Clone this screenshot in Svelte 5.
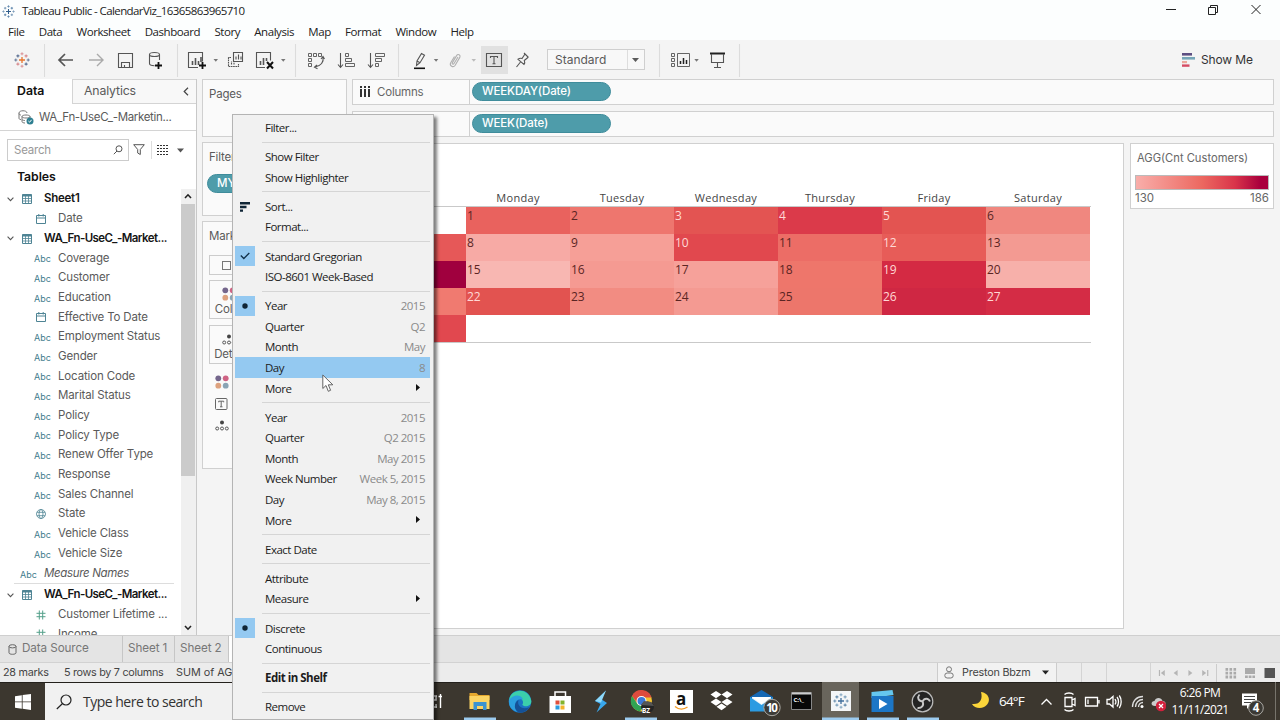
<script>
    const menus = ['File', 'Data', 'Worksheet', 'Dashboard', 'Story', 'Analysis', 'Map', 'Format', 'Window', 'Help'];

    const fields = [
        {kind: 'table', name: 'Sheet1'},
        {kind: 'date', name: 'Date'},
        {kind: 'table', name: 'WA_Fn-UseC_-Market...'},
        {kind: 'abc', name: 'Coverage'},
        {kind: 'abc', name: 'Customer'},
        {kind: 'abc', name: 'Education'},
        {kind: 'date', name: 'Effective To Date'},
        {kind: 'abc', name: 'Employment Status'},
        {kind: 'abc', name: 'Gender'},
        {kind: 'abc', name: 'Location Code'},
        {kind: 'abc', name: 'Marital Status'},
        {kind: 'abc', name: 'Policy'},
        {kind: 'abc', name: 'Policy Type'},
        {kind: 'abc', name: 'Renew Offer Type'},
        {kind: 'abc', name: 'Response'},
        {kind: 'abc', name: 'Sales Channel'},
        {kind: 'geo', name: 'State'},
        {kind: 'abc', name: 'Vehicle Class'},
        {kind: 'abc', name: 'Vehicle Size'},
        {kind: 'names', name: 'Measure Names'},
        {kind: 'table', name: 'WA_Fn-UseC_-Market...'},
        {kind: 'num', name: 'Customer Lifetime ...'},
        {kind: 'num', name: 'Income'}
    ];

    // null is a separator
    let items = [
        {label: 'Filter...'},
        null,
        {label: 'Show Filter'},
        {label: 'Show Highlighter'},
        null,
        {label: 'Sort...', mark: 'sort'},
        {label: 'Format...'},
        null,
        {label: 'Standard Gregorian', mark: 'check'},
        {label: 'ISO-8601 Week-Based'},
        null,
        {label: 'Year', value: '2015', mark: 'dot'},
        {label: 'Quarter', value: 'Q2'},
        {label: 'Month', value: 'May'},
        {label: 'Day', value: '8', hover: true},
        {label: 'More', more: true},
        null,
        {label: 'Year', value: '2015'},
        {label: 'Quarter', value: 'Q2 2015'},
        {label: 'Month', value: 'May 2015'},
        {label: 'Week Number', value: 'Week 5, 2015'},
        {label: 'Day', value: 'May 8, 2015'},
        {label: 'More', more: true},
        null,
        {label: 'Exact Date'},
        null,
        {label: 'Attribute'},
        {label: 'Measure', more: true},
        null,
        {label: 'Discrete', mark: 'dot'},
        {label: 'Continuous'},
        null,
        {label: 'Edit in Shelf', bold: true},
        null,
        {label: 'Remove'}
    ];

    const days = ['', 'Monday', 'Tuesday', 'Wednesday', 'Thursday', 'Friday', 'Saturday'];
    // [day, colour, light text]
    const cells = [
        ['', '#ffffff'], [1, '#e9625e'], [2, '#ee766e'], [3, '#e35452', 1], [4, '#db3a4a', 1], [5, '#e35451', 1], [6, '#f0877f'],
        ['', '#e65858'], [8, '#f7aaa5'], [9, '#f69f97'], [10, '#e1484e', 1], [11, '#ec6d66'], [12, '#e75c58', 1], [13, '#f39a92'],
        ['', '#a0003e'], [15, '#f8b7b2'], [16, '#f59a92'], [17, '#f6a19a'], [18, '#ee766b'], [19, '#d42a43', 1], [20, '#f7b0aa'],
        ['', '#f07a70'], [22, '#e25350', 1], [23, '#f28c82'], [24, '#f49a92'], [25, '#ed766b'], [26, '#cf2743', 1], [27, '#d42c45', 1],
        ['', '#e1484f']
    ];
</script>

{#snippet logo(a, b, c)}
    <svg width="16" height="16" viewBox="0 0 16 16" fill="none">
        <path d="M8 5v6M5 8h6" stroke={a} stroke-width="1.3"/>
        <path d="M8 .3v3M6.5 1.8h3M8 12.7v3M6.5 14.2h3" stroke={b} stroke-width=".9"/>
        <path d="M1.8 6.5v3M.3 8h3M14.2 6.5v3M12.7 8h3" stroke={c} stroke-width=".9"/>
        <path d="M3.9 2.4v3M2.4 3.9h3M12.1 10.6v3M10.6 12.1h3" stroke={c} stroke-width="1.1"/>
        <path d="M12.1 2.4v3M10.6 3.9h3M3.9 10.6v3M2.4 12.1h3" stroke={b} stroke-width="1.1"/>
    </svg>
{/snippet}

{#snippet caret()}
    <svg class="caret" width="7" height="4" viewBox="0 0 7 4"><path d="M0 0h7L3.500 4z" fill="currentColor"/></svg>
{/snippet}

{#snippet dots()}
    <svg width="14" height="14" viewBox="0 0 14 14">
        <circle cx="3.3" cy="3.3" r="2.9" fill="#74668c"/><circle cx="10.7" cy="3.3" r="2.9" fill="#cf6384"/>
        <circle cx="3.3" cy="10.7" r="2.9" fill="#dda27f"/><circle cx="10.7" cy="10.7" r="2.9" fill="#8aa4b5"/>
    </svg>
{/snippet}

{#snippet detail()}
    <svg width="14" height="11" viewBox="0 0 14 11" fill="none" stroke="#555">
        <circle cx="7" cy="2.4" r="2" fill="#444" stroke="none"/>
        <circle cx="2.2" cy="8.5" r="1.5"/><circle cx="7" cy="8.5" r="1.5"/><circle cx="11.8" cy="8.5" r="1.5"/>
    </svg>
{/snippet}

<div class="screen">
    <header class="title">
        <span class="app">{@render logo('#2f5d8c', '#5580a8', '#7395b5')}</span>
        <span class="name">Tableau Public - CalendarViz_16365863965710</span>
        <svg class="winbtns" width="110" height="20" viewBox="0 0 110 20" fill="none" stroke="#222">
            <path d="M6 9.5h10"/>
            <path d="M48.5 7.5h7v7h-7zM50.5 7.5v-2h7v7h-2"/>
            <path d="M91.5 5l9 9M100.500 5l-9 9"/>
        </svg>
    </header>

    <nav class="menubar">
        {#each menus as m}<span>{m}</span>{/each}
    </nav>

    <div class="toolbar">
        <span class="tlogo">{@render logo('#e8762d', '#d8898d', '#5b6f92')}</span>
        <svg class="tools" width="740" height="39" viewBox="44 0 740 39" fill="none" stroke="#555" stroke-width="1.1">
            <path d="M44.5 4v33M177.500 4v33M295.500 4v33M398.500 4v33M659.500 4v33M739.500 4v33" stroke="#dcdcdc"/>
            <path d="M73 20H59M65 14l-6 6 6 6" stroke-width="1.700"/>
            <path d="M89 20h14M97 14l6 6-6 6" stroke="#aaa" stroke-width="1.4"/>
            <path d="M118.500 13.500h14v14h-14zM121.500 27.500v-5h8v5M124.500 27.500v-2.500"/>
            <path d="M149.500 14.500v9c0 1.800 3 2.200 5 2.200M159.500 14.500v5.500"/><ellipse cx="154.500" cy="14.500" rx="5" ry="2"/>
            <path d="M158.500 22v7M155 25.500h7" stroke="#111" stroke-width="1.800"/>
            <!-- new worksheet -->
            <path d="M198 27.500h-9.500v-15h14v9"/><path d="M192.500 25v-4M195.500 25v-7M198.500 25v-4M201 22v-5" stroke-width="1.6"/>
            <path d="M202.500 22v7M199 25.500h7" stroke="#111" stroke-width="1.800"/>
            <!-- duplicate -->
            <path d="M233.500 12.500h9v9h-9zM236 19.500v-3M238.500 19.500v-5M241 19.500v-3"/>
            <path d="M231 17.500h-2.500v9h10v-2.500M231.500 24.500v-3M234 24.500v-2" stroke-dasharray="1.700 .6"/>
            <!-- clear sheet -->
            <path d="M265 27.500h-8.500v-15h14v8"/><path d="M260.500 25v-4M263.500 25v-7M266.500 21v-3" stroke-width="1.6"/>
            <path d="M267 22l6 6.500M273 22l-6 6.500" stroke="#111" stroke-width="2"/>
            <!-- swap -->
            <path d="M308.500 13.500h3v3h-3zM313.500 13.500h3v3h-3zM318.500 13.500h3v3h-3zM308.500 18.500h3v3h-3zM308.500 23.500h3v3h-3z" stroke-width=".9"/>
            <path d="M323 17c1 5-2 9-8 10M321 19l2-2.500 1.500 2.500M317 25l-2.500 2.200 3 1.500"/>
            <!-- sort -->
            <path d="M340.500 13v14M338 24.500l2.500 3 2.500-3"/>
            <path d="M345.500 13.500h3v3h-3zM345.500 18.500h6v3h-6zM345.500 23.500h9v3h-9z" stroke-width=".9"/>
            <path d="M370.500 13v14M368 24.500l2.500 3 2.500-3"/>
            <path d="M375.500 13.500h9v3h-9zM375.500 18.500h6v3h-6zM375.500 23.500h3v3h-3z" stroke-width=".9"/>
            <!-- highlight -->
            <path d="M416.500 25.500l.5-4.500 4.500-7.500 3 1.700-4.500 7.500zM417 21l3 1.700"/><path d="M414 28.300h11" stroke="#111" stroke-width="1.600"/>
            <!-- group members -->
            <path d="M458 17l-4 6.500c-.8 1.300-2.300.4-1.600-.9l4.200-7c1.300-2.200 4.400-.4 3.200 1.800l-4.600 7.800c-2 3-6 .6-4.500-2.400l3.800-6.300" stroke="#b0b0b0"/>
            <path d="M481 6h27v28h-27z" fill="#e1e1e1" stroke="none"/>
            <path d="M486.500 13.500h15v13h-15z"/><path d="M490.500 18v-1.500h7V18M494 16.500v7M492.500 23.700h3"/>
            <path d="M524 13l4.500 4.500M525 14l-3 4.500c-1.500-.5-3 0-4 .8l6 5.200c.7-1 1-2.500.3-4l3.600-3M520.500 22l-4 5"/>
            <!-- cards -->
            <path d="M671.500 13.500h3v3h-3zM671.500 18.500h3v3h-3zM671.500 23.500h3v3h-3zM677.500 13.500h12v13h-12z" stroke-width=".9"/>
            <path d="M680.500 24v-3M683.500 24v-6M686.500 24v-4" stroke="#222" stroke-width="1.500"/>
            <path d="M710 13.500h15" stroke="#222" stroke-width="2"/><path d="M711.500 14v8.500h12V14M717.500 22.500v4.500M714 27.500h7"/>
            <g fill="#777" stroke="none">
                <path d="M213.500 19h4.500l-2.200 2.800zM281 19h4.500l-2.200 2.800zM433.800 19h4.500l-2.200 2.800zM694.300 19h4.500l-2.200 2.800z"/>
                <path d="M471.500 19h4.500l-2.200 2.800z" fill="#bbb"/>
            </g>
        </svg>
        <div class="select"><span>Standard</span><i>{@render caret()}</i></div>
        <div class="showme">
            <svg width="14" height="14" viewBox="0 0 14 14">
                <path d="M0 0h10v2.600H0z" fill="#5d4f82"/><path d="M0 4h13v2.600H0z" fill="#76a6b8"/>
                <path d="M0 8h5v2.200H0z" fill="#eca89b"/><path d="M0 11.400h7.500v2.400H0z" fill="#d54b63"/>
            </svg>
            <span>Show Me</span>
        </div>
    </div>

    <main>
        <aside class="data">
            <div class="tabs">
                <b>Data</b>
                <span>Analytics
                    <svg width="6" height="9" viewBox="0 0 6 9"><path d="M5 .8L1.200 4.500 5 8.200" fill="none" stroke="#444" stroke-width="1.200"/></svg>
                </span>
            </div>
            <div class="source">
                <svg width="16" height="15" viewBox="0 0 16 15" fill="none" stroke="#777">
                    <path d="M3 9.500C1.500 9.500 1 9 1 8V3c0-3 8-3 8 0M1 3.500c0 1 1 1.500 2 1.500M4 6.500v5c0 1 1.500 1.500 3 1.500M4 6.500c0-2 8-2 8 0v1.500M4 6.500c0 2 8 2 8 0M4 9.500c.5.8 2 1 3 1"/>
                    <circle cx="12" cy="11" r="3.500" fill="#2e7f91" stroke="none"/><path d="M10.400 11l1.200 1.200 2-2.400" stroke="#fff"/>
                </svg>
                <span>WA_Fn-UseC_-Marketin...</span>
            </div>
            <div class="find">
                <div class="search">
                    <span>Search</span>
                    <svg width="10" height="10" viewBox="0 0 10 10" fill="none" stroke="#555"><circle cx="6" cy="3.800" r="3"/><path d="M4 6L.8 9.200"/></svg>
                </div>
                <svg width="12" height="12" viewBox="0 0 12 12" fill="none" stroke="#555"><path d="M.7.700h10.600L7.300 5.500v5L4.700 9V5.500z"/></svg>
                <i></i>
                <svg width="12" height="10" viewBox="0 0 12 10" stroke="#333"><path d="M0 .5h12M0 3.500h12M0 6.500h12M0 9.500h12" stroke-dasharray="2 1"/></svg>
                <svg class="drop" width="7" height="5" viewBox="0 0 7 5"><path d="M0 .5h7L3.500 4.500z" fill="#555"/></svg>
            </div>
            <h2>Tables</h2>
            <div class="tree">
                <div class="fields">
                    {#each fields as f}
                        <div class="field {f.kind}">
                            {#if f.kind === 'table'}
                                <svg class="chev" width="7" height="5" viewBox="0 0 7 5"><path d="M.6.700l2.900 3 2.900-3" fill="none" stroke="#555" stroke-width="1.100"/></svg>
                                <svg class="ico" width="10" height="10" viewBox="0 0 10 10" fill="none" stroke="#4e8494"><path d="M.5.500h9v9h-9z"/><path d="M.5 1.500h9" stroke-width="2"/><path d="M.5 4.500h9M.5 7h9M3.500 2v7.500M6.500 2v7.500" stroke-width=".8"/></svg>
                            {:else if f.kind === 'date'}
                                <svg class="ico" width="10" height="10" viewBox="0 0 10 10" fill="none" stroke="#4e8494"><path d="M.5 1.500h9v8h-9zM.5 4h9M2.800 0v2.500M7.200 0v2.500"/></svg>
                            {:else if f.kind === 'geo'}
                                <svg class="ico" width="10" height="10" viewBox="0 0 10 10" fill="none" stroke="#4e8494" stroke-width=".8"><circle cx="5" cy="5" r="4.500"/><ellipse cx="5" cy="5" rx="2" ry="4.500"/><path d="M1 3.300h8M1 6.700h8"/></svg>
                            {:else if f.kind === 'num'}
                                <svg class="ico" width="10" height="10" viewBox="0 0 10 10" fill="none" stroke="#54a08a"><path d="M3.300.500v9M6.700.500v9M.5 3.300h9M.5 6.700h9"/></svg>
                            {:else}
                                <em>Abc</em>
                            {/if}
                            <span>{f.name}</span>
                        </div>
                    {/each}
                </div>
                <div class="scroll">
                    <svg width="14" height="15" viewBox="0 0 14 15"><path d="M4 9l3-3.200L10 9" fill="none" stroke="#222" stroke-width="1.600"/></svg>
                    <div class="thumb"></div>
                    <svg width="14" height="15" viewBox="0 0 14 15"><path d="M4 6l3 3.200L10 6" fill="none" stroke="#222" stroke-width="1.600"/></svg>
                </div>
            </div>
        </aside>

        <section class="cards">
            <div class="card pages">Pages</div>
            <div class="card filters">Filters<div class="pill">MY(Date)</div></div>
            <div class="card marks">
                Marks
                <div class="type"><i></i></div>
                <div class="btn">{@render dots()}<span>Color</span></div>
                <div class="btn det">{@render detail()}<span>Detail</span></div>
                <div class="encs">
                    {@render dots()}
                    <svg width="13" height="12" viewBox="0 0 13 12" fill="none" stroke="#666"><rect x=".5" y=".5" width="11.500" height="11" rx="1"/><path d="M3.700 4.300V3.200h5v1.100M6.200 3.200v5.600M5 8.800h2.500"/></svg>
                    {@render detail()}
                </div>
            </div>
        </section>

        <section class="work">
            <div class="shelf">
                <div class="lab">
                    <svg width="10" height="11" viewBox="0 0 10 11" fill="#333"><path d="M0 0h2v2H0zM4 0h2v2H4zM8 0h2v2H8zM0 3h2v8H0zM4 3h2v8H4zM8 3h2v8H8z"/></svg>
                    <span>Columns</span>
                </div>
                <div class="pill">WEEKDAY(Date)</div>
            </div>
            <div class="shelf rows">
                <div class="lab">Rows</div>
                <div class="pill">WEEK(Date)</div>
            </div>
            <div class="lower">
                <div class="viz">
                    <div class="days">
                        {#each days as d}<span>{d}</span>{/each}
                    </div>
                    <div class="cal">
                        {#each cells as [n, color, light]}
                            <div class:light style="background:{color}">{n}</div>
                        {/each}
                    </div>
                </div>
                <div class="legend">
                    <p>AGG(Cnt Customers)</p>
                    <div class="ramp"></div>
                    <div class="range"><span>130</span><span>186</span></div>
                </div>
            </div>
        </section>
    </main>

    <div class="sheets">
        <span class="ds">
            <svg width="9" height="11" viewBox="0 0 9 11" fill="none" stroke="#666"><ellipse cx="4.500" cy="2.300" rx="3.500" ry="1.600"/><path d="M1 2.300v6.500c0 2 7 2 7 0V2.300"/></svg>
            Data Source
        </span>
        <span class="s1">Sheet 1</span>
        <span class="s2">Sheet 2</span>
        <span class="active"></span>
    </div>

    <footer class="status">
        <span class="n1">28 marks</span><span class="n2">5 rows by 7 columns</span><span class="n3">SUM of AGG</span>
        <div class="user">
            <svg width="10" height="13" viewBox="0 0 10 13" fill="none" stroke="#777"><circle cx="5" cy="3.300" r="2.500"/><rect x=".8" y="7" width="8.400" height="5" rx="2.400"/></svg>
            <span>Preston Bbzm</span>
            <svg width="7" height="5" viewBox="0 0 7 5"><path d="M0 .5h7L3.500 4.500z" fill="#222"/></svg>
        </div>
        <i class="b1"></i><i class="b2"></i><i class="b3"></i>
        <svg class="pager" width="66" height="18" viewBox="0 0 66 18" fill="#b5b5b5">
            <path d="M8 6h1.200v6H8zM14 6v6l-4-3zM27 6v6l-4-3zM38 6v6l4-3zM52 6v6l4-3zM57 6h1.200v6H57z"/>
        </svg>
        <svg class="views" width="63" height="18" viewBox="0 0 63 18">
            <path d="M8.500 4h2.600v2.800H8.500zm4 0h2.600v2.800h-2.600zm4 0h2.600v2.800h-2.600zM8.500 7.800h2.600v2.800H8.500zm4 0h2.600v2.800h-2.600zm4 0h2.600v2.800h-2.600zM8.500 11.600h2.600v2.800H8.500zm4 0h2.600v2.800h-2.600zm4 0h2.600v2.800h-2.600z" fill="#aaa"/>
            <path d="M28 4h10v6H28zM28 11.500h2.800v2.500H28zm3.700 0h2.800v2.500h-2.800zm3.700 0H38v2.500h-2.600z" fill="#aaa"/>
            <path d="M47.500 4h10.500v10H47.500z" fill="#555"/>
        </svg>
    </footer>

    <div class="taskbar">
        <div class="start"><svg width="16" height="16" viewBox="0 0 16 16" fill="#fff"><path d="M0 2.200L6.800 1.200v6.300H0zM7.600 1.100L16 0v7.500H7.600zM0 8.300h6.800v6.400L0 13.700zM7.600 8.300H16V16l-8.400-1.200z"/></svg></div>
        <div class="type-here">
            <svg width="16" height="16" viewBox="0 0 16 16" fill="none" stroke="#222" stroke-width="1.200"><circle cx="10" cy="6" r="5"/><path d="M6.300 9.700L.8 15"/></svg>
            <span>Type here to search</span>
        </div>
        <svg class="apps" width="506" height="38" viewBox="434 0 506 38">
            <path d="M822 0h37v38h-37z" fill="#69655c"/>
            <path d="M464 35.500h32v2.500h-32zM625 35.500h32v2.500h-32zM822 35.500h37v2.500h-37zM867 35.500h32v2.500h-32zM907 35.500h32v2.500h-32z" fill="#9ccbef"/>
            <path d="M434 14h3M434 25h3M436 14v4h-2M436 22v4M440.500 12v14M438.500 14.500h3.500" stroke="#fff" stroke-width="1.400" fill="none"/>
            <!-- explorer -->
            <path d="M469.500 11h7l2 2h11v5h-20z" fill="#e5a82e"/><path d="M469.500 14h20v13h-20z" fill="#fbd464"/><path d="M473.500 28v-8h13v8h-3.500v-4h-6v4z" fill="#3b93d0"/>
            <!-- edge -->
            <circle cx="520" cy="19.500" r="11.300" fill="#1b74c4"/>
            <path d="M509 19c1-13 20-14 22.300 0 .3 6-8 6.500-9 3.500 2-2 0-6.500-4-6.500-5 0-9 2-9.300 3z" fill="#3bcfab"/>
            <path d="M509 18c3-5 12-7 14-.5-8-2-11 7-4 12.500-7-1-10.500-5-10-12z" fill="#2b9fdf"/>
            <path d="M518.500 18c-2 6 4 10.500 11 7-2 4-6 6-10 5.800-6-2-6-10-1-12.800z" fill="#155197"/>
            <!-- store -->
            <path d="M549.500 14h21.500v17h-21.500z" fill="#fff"/><path d="M555 14v-4h10.500v4" fill="none" stroke="#fff" stroke-width="1.500"/>
            <path d="M555.500 18.500h4v4h-4z" fill="#e0503c"/><path d="M560.500 18.500h4v4h-4z" fill="#83b32c"/><path d="M555.500 23.500h4v4h-4z" fill="#2b9ce0"/><path d="M560.500 23.500h4v4h-4z" fill="#f3b42c"/>
            <path d="M606 8.500l-11 10.500 5.500 3-4 8.500 10.500-9.500-6-4z" fill="#39a7ec"/><path d="M606 8.500l-11 10.500 6 1.500z" fill="#8ed9fb"/>
            <!-- chrome -->
            <circle cx="641.500" cy="19" r="10.500" fill="#f4c430"/><path d="M632 14a10.500 10.500 0 0 1 19.500 1.500h-10l-4.500 5z" fill="#dd4b3e"/><path d="M632 14a10.500 10.500 0 0 0 8 15.400l4-6.900-6.500-.5z" fill="#31a353"/>
            <circle cx="641.500" cy="19" r="5" fill="#fff"/><circle cx="641.500" cy="19" r="4" fill="#3b78d8"/>
            <ellipse cx="647.500" cy="25" rx="6.500" ry="5.500" fill="#252525"/><path d="M641 23l3-4 7 1 3 4z" fill="#555"/>
            <text x="642" y="30.500" font-size="6.500" font-weight="700" fill="#fff">BZ</text>
            <path d="M670 8h23v23h-23z" fill="#fff"/><text x="676" y="23" font-size="17" font-weight="700" fill="#111">a</text><path d="M675 24.500c4 3.500 9 3 12.500.5" fill="none" stroke="#f39c24" stroke-width="1.400"/>
            <!-- dropbox -->
            <path d="M716 9l5.500 3.600-5.500 3.600-5.500-3.600zM727 9l5.500 3.600-5.500 3.600-5.500-3.600zM716 16.500l5.500 3.600-5.500 3.600-5.500-3.600zM727 16.500l5.500 3.600-5.500 3.600-5.500-3.600zM721.500 21.500l5 3.300-5 3.400-5-3.400z" fill="#fff"/>
            <!-- mail -->
            <path d="M750 15l11.500-7L773 15v14h-23z" fill="#1668b4"/><path d="M752 15h19v8h-19z" fill="#e9f4fb"/><path d="M750 15l11.500 8L773 15v14.500h-23z" fill="#2b9be2"/><path d="M752 15h19l-9.500 7z" fill="#fff"/>
            <circle cx="772" cy="25.500" r="8.200" fill="#3d3b37" stroke="#a9a7a2"/><text x="766.300" y="30" font-size="11.500" font-weight="700" textLength="11.500" fill="#fff">10</text>
            <path d="M791.500 10.500h20v17h-20z" fill="#080808" stroke="#888"/><path d="M792 10.500h19v2h-19z" fill="#ccc"/><text x="793.500" y="19.500" font-size="6" font-weight="700" fill="#fff">C:\_</text>
            <path d="M831 9h20v20h-20z" fill="#f4f6f8"/>
            <g transform="translate(833 11)">{@render logo('#416f9c', '#7ca0bd', '#5f87a9')}</g>
            <!-- movies -->
            <path d="M871.500 10l21-2 1 5-22 3z" fill="#65c7ef"/><path d="M871.500 14h22v16h-22z" fill="#1c76c6"/><path d="M879 17v10l8.500-5z" fill="#fff"/>
            <!-- obs -->
            <circle cx="922.500" cy="19.500" r="10.300" fill="#242424" stroke="#bbb" stroke-width="1.200"/>
            <path d="M922.500 19.500c-4.500-.5-5.500-4-3-7M922.500 19.500c2-4 6-3.500 7.500 0M922.500 19.500c2 4-1 7-5 6.500" fill="none" stroke="#c8c8c8" stroke-width="1.900"/>
        </svg>
        <svg class="tray" width="200" height="38" viewBox="966 0 200 38" fill="none" stroke="#fff" stroke-width="1.300">
            <path d="M981 10c9 1 11 11 3 15-4 2-10 1-12-3 8 1 11-5 9-12z" fill="#fbd53a" stroke="none"/>
            <path d="M1041.500 22.500l5-5 5 5"/>
            <path d="M1065 15.500h7v9h-7zM1072 18l3-1.500v7l-3-1.500M1064.500 12.500c2-2 7-2 9 0M1064.500 27.500c2 2 7 2 9 0"/>
            <path d="M1085.500 15.500h12v8.500h-12zM1099 18v3.500M1088 17.500v4.500"/>
            <path d="M1107 17.500h2.500l3.500-3v10.500l-3.500-3h-2.500zM1115 17c1 1.500 1 4 0 5.500M1117 15c2 2.500 2 7 0 9.500M1119.300 13.500c2.500 3.500 2.500 9 0 12.500"/>
            <path d="M1132.500 25c0-6 4-10.500 10.500-10.500M1135.500 25c0-4 3-7.500 7.500-7.500M1138.500 25c0-2.500 2-4.500 4.500-4.500" stroke="#ddd"/><circle cx="1142" cy="24.500" r="1.500" fill="#fff" stroke="none"/>
            <path d="M1155 24c-5 0-4-5-.5-5 1-4 7-4 8 0 4 0 4 5 0 5z" fill="#ccc" stroke="none"/>
            <circle cx="1161" cy="24" r="5.200" fill="#d2203c" stroke="none"/><path d="M1159 22l4 4M1163 22l-4 4" stroke-width="1.200"/>
        </svg>
        <span class="temp">64°F</span>
        <div class="clock"><span>6:26 PM</span><span>11/11/2021</span></div>
        <svg class="note" width="40" height="38" viewBox="1236 0 40 38">
            <path d="M1242 11.500h15v12h-7l-3 3.500v-3.500h-5z" fill="#fff"/><path d="M1244 14.500h11M1244 17.500h11M1244 20.500h7" stroke="#444"/>
            <circle cx="1256" cy="26" r="7.300" fill="#3b3934" stroke="#a9a7a2"/><text x="1252.700" y="30.300" font-size="11.500" font-weight="700" fill="#fff">4</text>
            <path d="M1275.500 0v38" stroke="#77746c"/>
        </svg>
    </div>

    <div class="menu">
        {#each items as it}
            {#if it}
                <div class="item" class:hover={it.hover} class:bold={it.bold}>
                    <div class="mark" class:on={it.mark && it.mark !== 'sort'}>
                        {#if it.mark === 'sort'}
                            <svg width="10" height="10" viewBox="0 0 10 10" fill="#0f2536"><path d="M0 0h10v2.400H0zM0 3.800h6.500v2.400H0zM0 7.400h3v2.300H0z"/></svg>
                        {:else if it.mark === 'check'}
                            <svg width="10" height="8" viewBox="0 0 10 8"><path d="M.8 3.500l3 3L9.300 1" fill="none" stroke="#12314a" stroke-width="1.300"/></svg>
                        {:else if it.mark === 'dot'}
                            <svg width="6" height="6" viewBox="0 0 6 6"><circle cx="3" cy="3" r="2.700" fill="#0f2536"/></svg>
                        {/if}
                    </div>
                    <span class="lbl">{it.label}</span>
                    {#if it.value}<span class="val">{it.value}</span>{/if}
                    {#if it.more}<svg class="arrow" width="4" height="7" viewBox="0 0 4 7"><path d="M0 0l4 3.500L0 7z" fill="#111"/></svg>{/if}
                </div>
            {:else}
                <hr/>
            {/if}
        {/each}
    </div>

    <svg class="cursor" width="12" height="19" viewBox="0 0 12 19"><path d="M.8 1v13.500l3.200-3 2.300 5.800 2.300-1-2.300-5.500h4.500z" fill="#fff" stroke="#555" stroke-width=".9"/></svg>
</div>

<style>
    :global(body) {
        margin: 0;
        overflow: hidden;
    }
    .screen {
        position: relative;
        width: 1280px;
        height: 720px;
        display: flex;
        flex-direction: column;
        overflow: hidden;
        background: #f4f4f4;
        font: 11.5px/1 Inter, "Liberation Sans", sans-serif;
        color: #5a5a5a;
        white-space: nowrap;
    }
    .screen *, .screen {
        box-sizing: border-box;
    }
    svg {
        display: block;
        flex: none;
    }
    i {
        display: block;
    }
    .title, .menubar {
        height: 20px;
        background: #fcfefe;
        display: flex;
        align-items: center;
        font: 11.5px/1 "Open Sans", "Noto Sans", sans-serif;
        color: #222;
        flex: none;
    }
    .title {
        padding: 2px 10px 0 2px;
    }
    .app svg {
        width: 13px;
        height: 13px;
    }
    .name {
        margin-left: 7px;
        letter-spacing: -.59px;
    }
    .winbtns {
        margin: -2px 0 0 auto;
    }
    .menubar {
        padding: 3px 0 0 8px;
        gap: 14.3px;
        letter-spacing: -.44px;
    }
    .toolbar {
        height: 39px;
        flex: none;
        display: flex;
        align-items: center;
        position: relative;
        padding-left: 14px;
    }
    .tlogo {
        width: 30px;
    }
    .select {
        position: absolute;
        left: 547px;
        top: 9px;
        width: 98px;
        height: 21px;
        border: 1px solid #cfcfcf;
        background: #f8f8f8;
        display: flex;
        align-items: center;
        padding-left: 7px;
        font-size: 12px;
    }
    .select i {
        margin-left: auto;
        width: 17px;
        height: 19px;
        border-left: 1px solid #ddd;
        padding: 8px 0 0 4px;
    }
    .showme {
        display: flex;
        align-items: center;
        gap: 5px;
        margin-left: auto;
        padding-right: 27px;
        font-size: 12px;
        letter-spacing: -.1px;
        color: #333;
    }
    .showme span {
        padding-top: 1px;
    }
    main {
        height: 556px;
        flex: none;
        display: flex;
    }
    .data {
        width: 197px;
        flex: none;
        background: #fff;
        border-right: 1px solid #c8c8c8;
        display: flex;
        flex-direction: column;
    }
    .tabs {
        display: flex;
        height: 25px;
        flex: none;
        font-size: 12.3px;
    }
    .tabs b {
        width: 72px;
        padding: 6px 0 0 17px;
        color: #111;
        font-weight: 600;
    }
    .tabs span {
        flex: 1;
        display: flex;
        justify-content: space-between;
        align-items: center;
        padding: 0 7px 0 11px;
        border: 1px solid #d4d4d4;
        border-right: 0;
        background: #f8f8f8;
        letter-spacing: -.15px;
    }
    .source {
        display: flex;
        align-items: center;
        gap: 5px;
        height: 27px;
        flex: none;
        padding-left: 18px;
        border-bottom: 1px solid #d4d4d4;
        letter-spacing: -.33px;
    }
    .source span {
        padding-top: 2px;
    }
    .find {
        display: flex;
        align-items: center;
        margin: 8px 0 0 7px;
        height: 22px;
        flex: none;
    }
    .search {
        width: 122px;
        height: 22px;
        border: 1px solid #ccc;
        padding: 0 5px 0 6px;
        display: flex;
        align-items: center;
        justify-content: space-between;
        color: #999;
        margin-right: 4px;
    }
    .search span {
        padding-top: 2px;
        letter-spacing: -.2px;
    }
    .find i {
        width: 1px;
        height: 18px;
        background: #ddd;
        margin: 0 5px 0 6px;
    }
    .drop {
        margin-left: 8px;
    }
    h2 {
        font-size: 12.3px;
        line-height: 15px;
        font-weight: 600;
        color: #111;
        margin: 8px 0 0 17px;
        letter-spacing: -.1px;
    }
    .tree {
        margin-top: 5px;
        flex: 1;
        min-height: 0;
        display: flex;
    }
    .fields {
        flex: 1;
        overflow: hidden;
        padding-top: .4px;
    }
    .field {
        height: 19.7px;
        display: flex;
        align-items: center;
        padding-left: 36px;
        letter-spacing: -.15px;
    }
    .field span {
        margin-left: 12px;
    }
    .field em {
        font: 9px/1 Inter, sans-serif;
        color: #3f7b8c;
        width: 16px;
        margin: 1px -4px 0 -2px;
        letter-spacing: 0;
    }
    .table {
        padding-left: 7px;
    }
    .table .ico {
        margin-left: 8px;
    }
    .table span {
        font-weight: 600;
        color: #151515;
        letter-spacing: -.55px;
    }
    .table:first-child span {
        letter-spacing: -.25px;
    }
    .names {
        padding-left: 22px;
        height: 21px;
        position: relative;
        margin-bottom: .8px;
    }
    .names::after {
        content: '';
        position: absolute;
        left: 14px;
        right: 7px;
        bottom: 0;
        height: 1px;
        background: #ddd;
    }
    .names span {
        font-style: italic;
        letter-spacing: -.35px;
    }
    .scroll {
        width: 15px;
        background: #f0f0f0;
        display: flex;
        flex-direction: column;
    }
    .thumb {
        width: 14px;
        height: 272px;
        background: #cbcbcb;
        margin-bottom: auto;
    }
    .cards {
        width: 145px;
        margin-left: 5px;
        flex: none;
        display: flex;
        flex-direction: column;
        gap: 5px;
    }
    .card {
        border: 1px solid #d0d0d0;
        background: #fafafa;
        padding: 9px 6px;
        color: #5a5a5a;
        letter-spacing: -.2px;
    }
    .pages {
        height: 58px;
    }
    .filters {
        height: 74px;
    }
    .filters .pill {
        margin: 10px 0 0 -2px;
    }
    .marks {
        height: 248px;
    }
    .type {
        width: 130px;
        height: 20px;
        border: 1px solid #ccc;
        margin-top: 12px;
        padding: 5px 0 0 12px;
    }
    .type i {
        width: 9px;
        height: 9px;
        border: 1px solid #777;
    }
    .btn {
        width: 40px;
        height: 39px;
        border: 1px solid #ccc;
        margin-top: 5px;
        display: flex;
        flex-direction: column;
        align-items: center;
        justify-content: space-between;
        padding: 6px 0 2px;
    }
    .btn.det {
        padding-top: 8px;
        margin-top: 6px;
    }
    .encs {
        display: flex;
        flex-direction: column;
        gap: 9.500px;
        padding: 11px 0 0 6px;
    }
    .work {
        flex: 1;
        margin-left: 5px;
        padding-right: 6px;
    }
    .shelf {
        height: 26px;
        border: 1px solid #d0d0d0;
        background: #fafafa;
        display: flex;
        align-items: center;
        margin-bottom: 6px;
    }
    .lab {
        width: 117px;
        height: 100%;
        border-right: 1px solid #d0d0d0;
        display: flex;
        align-items: center;
        gap: 7px;
        padding-left: 7px;
        color: #666;
    }
    .lab span {
        padding-top: 1px;
        letter-spacing: -.2px;
    }
    .lab svg {
        margin-top: -2px;
    }
    .pill {
        width: 139px;
        height: 19px;
        border-radius: 10px;
        background: #4e9caa;
        border: 1px solid #3f8c9b;
        color: #fff;
        display: flex;
        align-items: center;
        padding: 1px 0 0 9px;
        margin: -1px 0 0 2px;
        font-weight: 500;
        letter-spacing: -.1px;
    }
    .lower {
        display: flex;
        gap: 6px;
        align-items: flex-start;
    }
    .viz {
        width: 772px;
        height: 486px;
        background: #fff;
        border: 1px solid #d0d0d0;
        padding: 47px 0 0 9px;
    }
    .days, .cal {
        display: grid;
        grid-template-columns: repeat(7, 104px);
    }
    .days {
        height: 15px;
        text-align: center;
        color: #444;
        font: 11px/13px "Open Sans", sans-serif;
        letter-spacing: .3px;
    }
    .cal {
        width: 729px;
        grid-auto-rows: 27px;
        border-top: 1px solid #c9c9c9;
        border-bottom: 1px solid #c9c9c9;
    }
    .cal div {
        font: 12px/12px "Open Sans", sans-serif;
        padding: 2.500px 0 0 1px;
        color: #5b2523;
    }
    .cal .light {
        color: #ffd9d5;
    }
    .legend {
        width: 144px;
        height: 66px;
        border: 1px solid #d0d0d0;
        background: #fff;
        padding: 8px 4px 0;
        color: #666;
        font-size: 11.2px;
    }
    .legend p {
        margin: 0 0 0 2px;
        line-height: 12px;
    }
    .ramp {
        height: 15px;
        margin-top: 11px;
        border: 1px solid #bbb;
        background: linear-gradient(90deg, #f9aeaa, #ec6860 50%, #d9344a 75%, #a9003d 94%);
    }
    .range {
        display: flex;
        justify-content: space-between;
        margin-top: 3px;
        font-size: 11.500px;
    }
    .sheets {
        height: 28px;
        flex: none;
        display: flex;
        border-top: 1px solid #cfcfcf;
        border-bottom: 1px solid #d2d2d2;
        background: #e4e4e4;
        color: #777;
        font-size: 11.7px;
        letter-spacing: -.1px;
    }
    .sheets span {
        display: flex;
        align-items: center;
        border-right: 1px solid #c6c6c6;
    }
    .ds {
        width: 123px;
        padding-left: 8px;
        gap: 5px;
    }
    .s1 {
        width: 52px;
        padding-left: 5px;
    }
    .s2 {
        width: 54px;
        padding-left: 5px;
    }
    .active {
        width: 80px;
        background: #fff;
    }
    .status {
        height: 19px;
        flex: none;
        display: flex;
        align-items: center;
        background: #ececec;
        font-size: 10.800px;
        color: #444;
    }
    .n1 {
        width: 60px;
        padding-left: 3px;
        letter-spacing: -.25px;
    }
    .n2 {
        width: 116px;
        padding-left: 4px;
        letter-spacing: -.3px;
    }
    .n1, .n2, .n3 {
        padding-top: 2px;
    }
    .user {
        margin-left: auto;
        width: 120px;
        height: 19px;
        border: solid #ccc;
        border-width: 0 1px;
        background: #f2f2f2;
        display: flex;
        align-items: center;
        padding: 0 7px 0 6px;
    }
    .user span {
        margin: 0 auto 0 8px;
        padding-top: 1px;
        letter-spacing: -.2px;
    }
    .status i {
        height: 19px;
        border-right: 1px solid #d4d4d4;
    }
    .b1 {
        width: 25px;
    }
    .b2 {
        width: 25px;
    }
    .b3 {
        width: 44px;
    }
    .pager {
        border-right: 1px solid #ccc;
    }
    .taskbar {
        position: relative;
        height: 38px;
        flex: none;
        background: #3c372f;
        border-top: 1px solid #24211c;
        display: flex;
        font-family: "Open Sans", sans-serif;
        color: #fff;
    }
    .taskbar svg text {
        font-family: "Open Sans", sans-serif;
    }
    .start {
        width: 45px;
        padding: 11px 0 0 15px;
    }
    .type-here {
        width: 389px;
        background: #f1f1f1;
        color: #333;
        display: flex;
        align-items: center;
        padding-left: 11px;
        gap: 11px;
        font-size: 14px;
        letter-spacing: -.5px;
    }
    .apps, .tray, .note {
        margin-top: -1px;
    }
    .tray {
        margin-left: 26px;
    }
    .temp {
        position: absolute;
        left: 999px;
        top: 12px;
        font-size: 13.5px;
        letter-spacing: -.8px;
    }
    .clock {
        width: 68px;
        margin-right: 2px;
        display: flex;
        flex-direction: column;
        align-items: center;
        padding-top: 4px;
        gap: 5px;
        font-size: 12px;
        letter-spacing: -.65px;
    }
    .menu {
        position: absolute;
        left: 232px;
        top: 114px;
        width: 202px;
        height: 606px;
        padding: 2.500px 3px 0 2px;
        background: #f1f1f1;
        border: 1px solid #b4b4b4;
        box-shadow: 3px 3px 3px rgba(0, 0, 0, .5);
        font: 11.5px/1 "Open Sans", sans-serif;
        letter-spacing: -.5px;
        color: #1c1c1c;
    }
    .item {
        height: 20.6px;
        display: flex;
        align-items: center;
    }
    .hover {
        background: #94c9f1;
    }
    .bold {
        font-weight: 700;
    }
    .mark {
        width: 20px;
        height: 20px;
        display: flex;
        align-items: center;
        justify-content: center;
        margin-right: 10px;
    }
    .on {
        background: #94c9f1;
    }
    .val {
        margin-left: auto;
        margin-right: 5px;
        color: #8a8a8a;
    }
    .arrow {
        margin: -2px 10px 0 auto;
    }
    hr {
        height: 1px;
        border: 0;
        background: #d5d5d5;
        margin: 3.5px 0 4px 27px;
    }
    .cursor {
        position: absolute;
        left: 322px;
        top: 374px;
    }
</style>
